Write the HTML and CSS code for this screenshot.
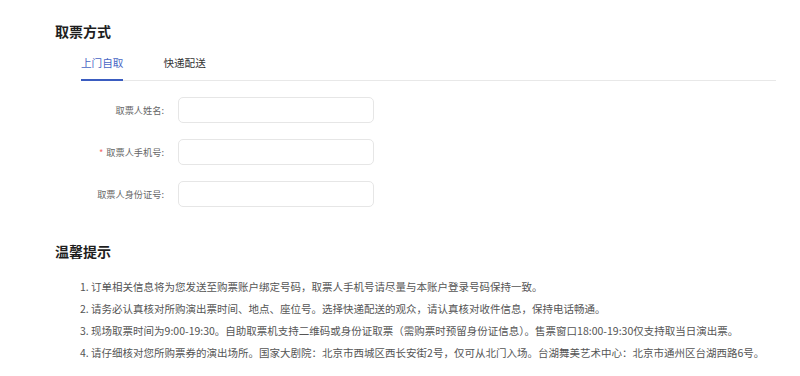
FILE: index.html
```html
<!DOCTYPE html>
<html lang="zh-CN">
<head>
    <meta charset="UTF-8">
    <meta name="viewport" content="width=device-width, initial-scale=1.0">
    <title>取票方式</title>
    <link rel="stylesheet" href="styles.css">
</head>
<body>

    <div class="page">
        <h2 class="section-title">取票方式</h2>

        <div class="tabs">
            <div class="tab active">上门自取</div>
            <div class="tab">快递配送</div>
        </div>

        <form class="pickup-form">
            <div class="form-row">
                <label for="name">取票人姓名:</label>
                <input type="text" id="name">
            </div>
            <div class="form-row">
                <label for="phone"><span class="required">*</span>取票人手机号:</label>
                <input type="text" id="phone">
            </div>
            <div class="form-row">
                <label for="idcard">取票人身份证号:</label>
                <input type="text" id="idcard">
            </div>
        </form>

        <h2 class="section-title tips-title">温馨提示</h2>

        <ol class="tips">
            <li>1. 订单相关信息将为您发送至购票账户绑定号码，取票人手机号请尽量与本账户登录号码保持一致。</li>
            <li>2. 请务必认真核对所购演出票时间、地点、座位号。选择快递配送的观众，请认真核对收件信息，保持电话畅通。</li>
            <li>3. 现场取票时间为9:00-19:30。自助取票机支持二维码或身份证取票（需购票时预留身份证信息）。售票窗口18:00-19:30仅支持取当日演出票。</li>
            <li>4. 请仔细核对您所购票券的演出场所。国家大剧院：北京市西城区西长安街2号，仅可从北门入场。台湖舞美艺术中心：北京市通州区台湖西路6号。</li>
        </ol>
    </div>

</body>
</html>
```

FILE: styles.css
```css
body {
    font-family: "Noto Sans CJK SC", "Noto Sans", sans-serif;
    margin: 0;
    background-color: #fff;
    color: #333;
}

.page {
    padding: 21px 24px 0 55px;
}

.section-title {
    margin: 0;
    font-size: 14px;
    line-height: 20px;
    font-weight: bold;
    color: #1e1e1e;
}

.tabs {
    display: flex;
    gap: 40px;
    margin: 12px 0 0 26px;
    border-bottom: 1px solid #e8e8e8;
}

.tab {
    font-size: 10.6px;
    line-height: 20px;
    padding-bottom: 6px;
    margin-bottom: -1px;
    color: #333;
    border-bottom: 2px solid transparent;
}

.tab.active {
    color: #4866c4;
    border-bottom-color: #3a5cc0;
}

.pickup-form {
    display: flex;
    flex-direction: column;
    gap: 16px;
    margin-top: 16px;
    padding-left: 25px;
}

.form-row {
    display: flex;
    align-items: center;
    gap: 14px;
}

.form-row label {
    width: 84px;
    text-align: right;
    font-size: 9.2px;
    color: #666;
}

.required {
    color: #f56c6c;
    margin-right: 3px;
}

.form-row input {
    box-sizing: border-box;
    width: 196px;
    height: 26px;
    border: 1px solid #e6e6e6;
    border-radius: 5px;
    outline: none;
}

.tips-title {
    margin-top: 34px;
}

.tips {
    list-style: none;
    margin: 15px 0 0;
    padding-left: 25px;
    font-size: 10.5px;
    line-height: 22px;
    color: #555;
}
```
